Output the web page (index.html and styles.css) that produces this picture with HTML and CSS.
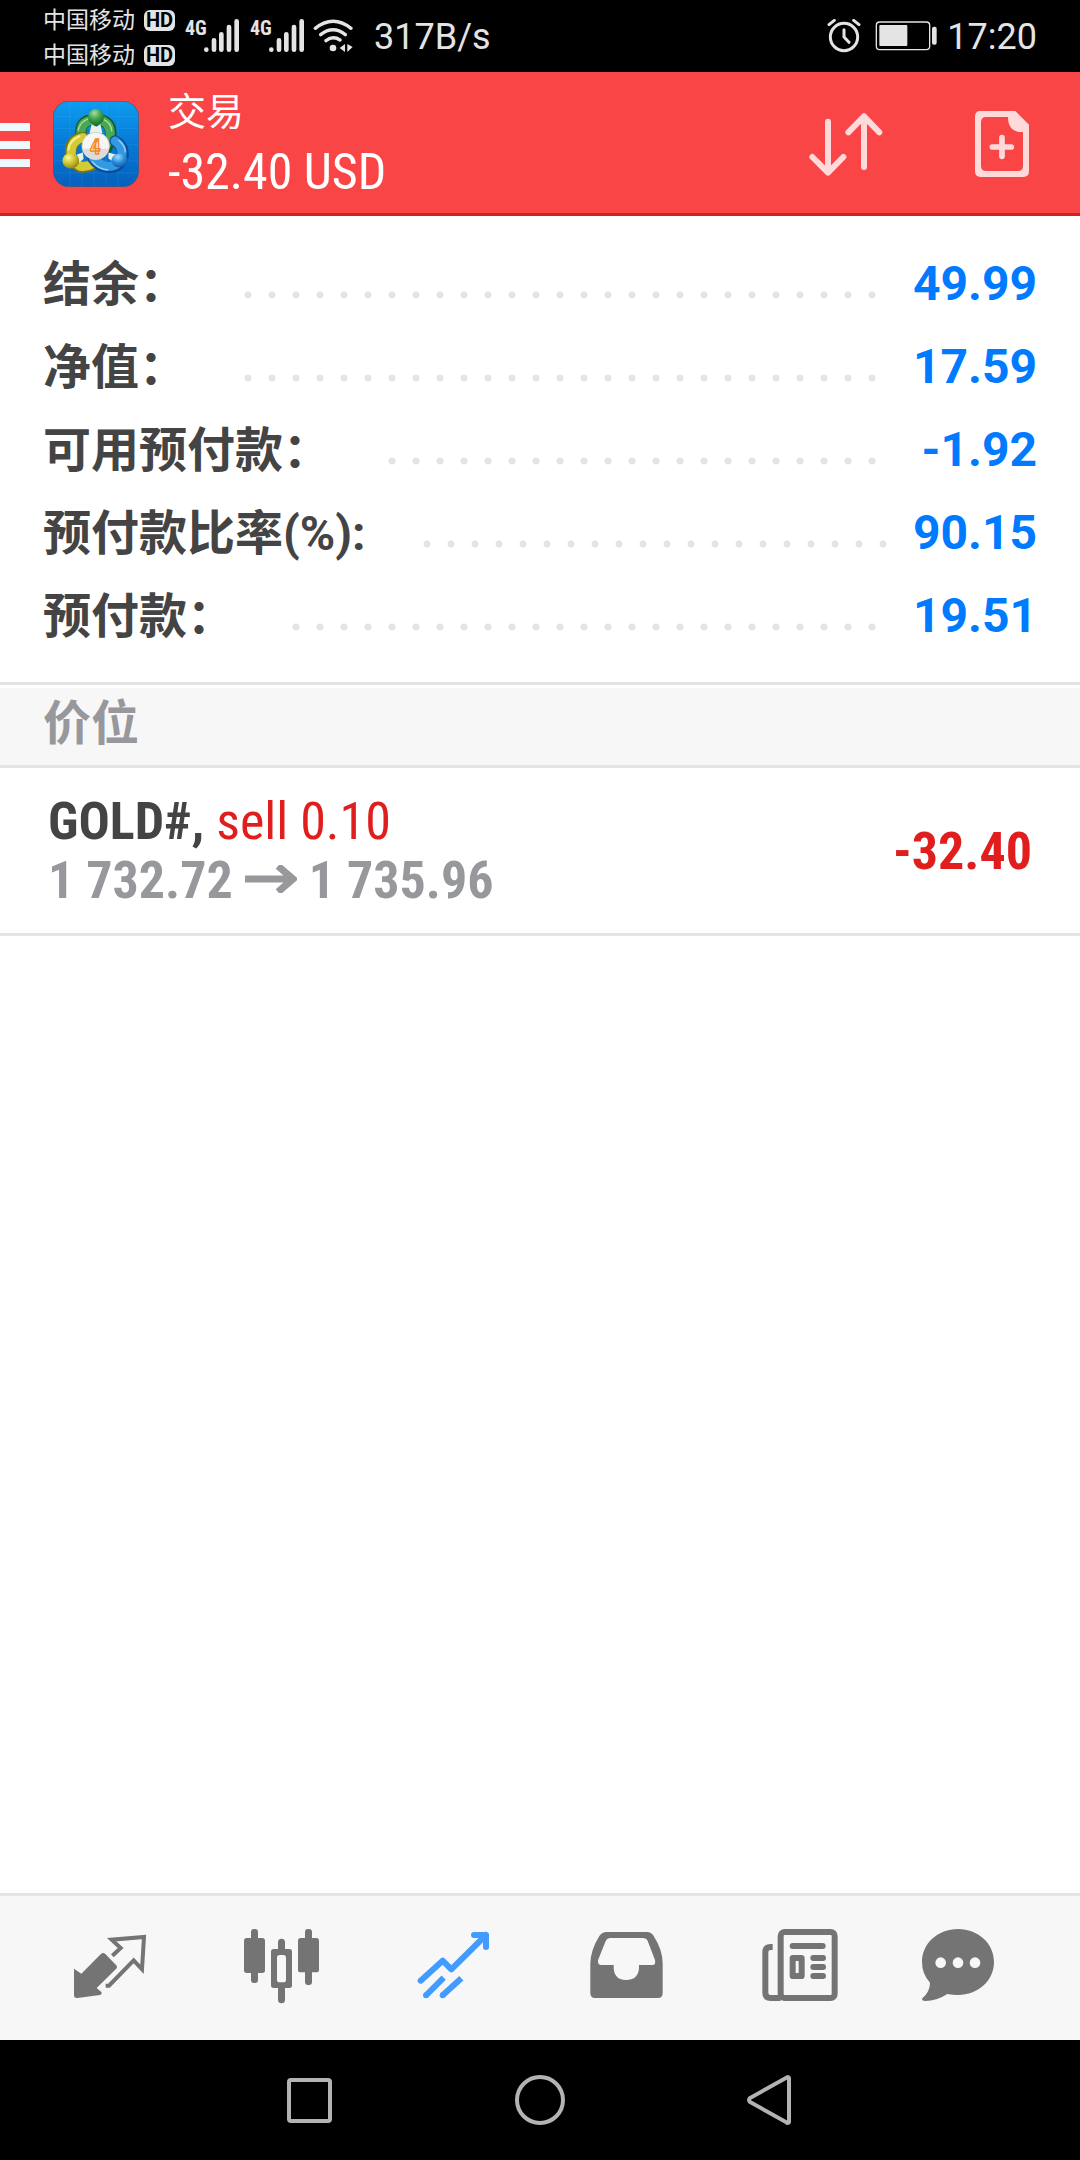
FILE: index.html
```html
<!DOCTYPE html>
<html lang="zh-CN">
<head>
<meta charset="utf-8">
<meta name="viewport" content="width=device-width, initial-scale=1">
<title>交易</title>
<link rel="stylesheet" href="styles.css">
</head>
<body>
<div class="status">
  <div class="carriers">
    <div class="carrier">中国移动 <span class="hd">HD</span></div>
    <div class="carrier">中国移动 <span class="hd">HD</span></div>
  </div>
  <div class="signal">
    <span class="net">4G</span>
    <svg class="bars" viewBox="0 0 105 99" aria-hidden="true"><path d="M7 92v0M30 64v28M52 46v46M75 24v68M98 7v85"/></svg>
  </div>
  <div class="signal">
    <span class="net">4G</span>
    <svg class="bars" viewBox="0 0 105 99" aria-hidden="true"><path d="M7 92v0M30 64v28M52 46v46M75 24v68M98 7v85"/></svg>
  </div>
  <svg class="wifi" viewBox="939 57 120 102" aria-hidden="true">
    <path class="wifi-arc" d="M946 85Q999 43 1053 85M962 104Q999 75 1036 104M978 122Q999 106 1020 120"/>
    <circle cx="999" cy="144" r="10"/>
    <path d="M1019 144L1035 132V156ZM1042 132V156L1058 141Z"/>
  </svg>
  <span class="speed">317B/s</span>
  <svg class="alarm" viewBox="146 60 102 102" aria-hidden="true">
    <circle cx="197" cy="114" r="41"/><path d="M197 92V114L212 130M152 77L168 64M242 77L226 64"/>
  </svg>
  <svg class="battery" viewBox="291 66 186 90" aria-hidden="true">
    <rect class="cell" x="295" y="69" width="160" height="83" rx="10"/><rect x="304" y="78" width="84" height="63" rx="3"/><rect x="462" y="83" width="14" height="54" rx="6"/>
  </svg>
  <time class="clock">17:20</time>
</div>

<header class="header">
  <button class="menu" aria-label="菜单"><i></i><i></i><i></i></button>
  <svg class="logo" viewBox="41 35 256 256" role="img" aria-label="MetaTrader 4">
    <defs>
      <linearGradient id="sky" x1="0" y1="0" x2="0" y2="1"><stop offset="0" stop-color="#0d9df0"/><stop offset=".5" stop-color="#0779d6"/><stop offset="1" stop-color="#0560bd"/></linearGradient>
      <radialGradient id="green" cx=".4" cy=".25" r=".8"><stop offset="0" stop-color="#a5dba0"/><stop offset=".5" stop-color="#3da04a"/><stop offset="1" stop-color="#16672b"/></radialGradient>
      <radialGradient id="yellow" cx=".35" cy=".3" r=".8"><stop offset="0" stop-color="#fbf59a"/><stop offset=".5" stop-color="#cdc22c"/><stop offset="1" stop-color="#827b13"/></radialGradient>
      <radialGradient id="blue" cx=".4" cy=".25" r=".8"><stop offset="0" stop-color="#9adcff"/><stop offset=".5" stop-color="#2b8fdc"/><stop offset="1" stop-color="#0b4f9e"/></radialGradient>
    </defs>
    <rect x="42" y="36" width="254" height="254" rx="46" fill="url(#sky)" stroke="#39577f" stroke-width="2"/>
    <path d="M91 37V289M127 37V289M163 37V289M199 37V289M235 37V289M43 81H295M43 117H295M43 165H295M43 213H295M43 249H295" stroke="#55b4f0" stroke-opacity=".25" stroke-width="2"/>
    <g fill="none" stroke-linecap="round">
      <path d="M124 134Q122 94 154 92L184 92Q216 100 213 140Q210 160 200 176" stroke="#155c2b" stroke-width="34"/>
      <path d="M124 132Q124 96 154 93L184 93Q214 101 211 140Q208 156 198 168" stroke="#48a952" stroke-width="27"/>
      <path d="M116 122Q122 96 146 88M190 89Q214 100 216 124" stroke="#a7dda1" stroke-width="4"/>
      <path d="M130 144Q93 150 93 190Q91 216 122 231Q142 234 160 224" stroke="#7b7410" stroke-width="34"/>
      <path d="M130 144Q95 152 95 188Q95 215 122 229Q142 232 158 222" stroke="#d4ca35" stroke-width="27"/>
      <path d="M120 140Q90 152 87 180" stroke="#f5ef87" stroke-width="6"/>
      <path d="M226 154Q252 168 249 200Q240 234 204 233Q176 230 160 206" stroke="#0c4d98" stroke-width="34"/>
      <path d="M226 154Q250 170 246 198Q238 230 204 230Q178 226 162 206" stroke="#3399e0" stroke-width="27"/>
      <path d="M236 152Q256 168 256 186M158 216Q178 240 204 240" stroke="#93d4fa" stroke-width="4"/>
    </g>
    <path d="M156 104L170 112L182 104L188 130H150ZM112 194L130 188L132 208L118 218ZM206 188L228 194L220 216L206 206Z" fill="#e9f2e8"/>
    <circle cx="169" cy="83" r="24" fill="url(#green)"/>
    <ellipse cx="94" cy="213" rx="25" ry="23" fill="url(#yellow)"/>
    <ellipse cx="239" cy="212" rx="24" ry="21" fill="url(#blue)"/>
    <circle cx="168" cy="169" r="41" fill="#f8f6f5" stroke="#b9c4c0" stroke-width="2"/>
    <path d="M128 177H208A41 41 0 0 1 128 177Z" fill="#dedcda"/>
    <text x="167" y="192" text-anchor="middle" class="logo-digit">4</text>
  </svg>
  <div class="heading">
    <h1 class="title">交易</h1>
    <p class="profit">-32.40 USD</p>
  </div>
  <button class="tool" aria-label="排序">
    <svg class="sort" viewBox="87 333 222 195" aria-hidden="true"><path d="M144 362V514M97 468L144 515L190 468M252 498V346M205 394L252 346L298 394"/></svg>
  </button>
  <button class="tool" aria-label="新订单">
    <svg class="doc" viewBox="585 333 162 198" aria-hidden="true">
      <path fill-rule="evenodd" d="M600 333H706L747 374V514Q747 531 730 531H602Q585 531 585 514V350Q585 333 600 333ZM618 351Q603 351 603 367V497Q603 513 618 513H714Q729 513 729 498V396Q684 398 684 351Z"/>
      <path class="plus" d="M637 441H694M666 413V469"/>
    </svg>
  </button>
</header>

<main class="main">
  <dl class="summary">
    <div class="line"><dt>结余：</dt><span class="dots"></span><dd>49.99</dd></div>
    <div class="line"><dt>净值：</dt><span class="dots"></span><dd>17.59</dd></div>
    <div class="line"><dt>可用预付款：</dt><span class="dots"></span><dd>-1.92</dd></div>
    <div class="line"><dt>预付款比率(%):</dt><span class="dots"></span><dd>90.15</dd></div>
    <div class="line"><dt>预付款：</dt><span class="dots"></span><dd>19.51</dd></div>
  </dl>
  <h2 class="section">价位</h2>
  <article class="position">
    <div class="deal">
      <p class="symbol">GOLD#, <span class="side">sell 0.10</span></p>
      <p class="prices">1 732.72 <svg class="arrow" viewBox="0 0 52 28" role="img" aria-label="至"><path d="M0 14H46M33 1L48 14L33 27"/></svg> 1 735.96</p>
    </div>
    <p class="result">-32.40</p>
  </article>
</main>

<nav class="tabs">
  <a class="tab" href="#quotes" aria-label="行情"><svg viewBox="66 120 288 288"><path d="M102 266L124 281L182 223Q189 216 196 222L228 255Q234 261 228 267L170 324L184 336Q187 343 180 345L112 354Q102 355 102 346Z"/><path class="thin" d="M217 227L242 204L215 179L312 171L306 268L281 241L207 317H197"/></svg></a>
  <a class="tab" href="#chart" aria-label="图表"><svg viewBox="582 120 288 288"><rect x="612" y="174" width="63" height="105" rx="8"/><rect x="633" y="147" width="21" height="162" rx="9"/><rect x="774" y="174" width="63" height="103" rx="8"/><rect x="795" y="147" width="21" height="168" rx="9"/><path d="M714 207V187A10 10 0 0 1 735 187V207H748Q756 207 756 215V316Q756 324 748 324H735V359A10 10 0 0 1 714 359V324H701Q693 324 693 316V215Q693 207 701 207ZM719 225Q711 225 711 233V299Q711 307 719 307H730Q738 307 738 299V233Q738 225 730 225Z" fill-rule="evenodd"/></svg></a>
  <a class="tab active" href="#trade" aria-label="交易" aria-current="page"><svg viewBox="1098 120 288 288"><path class="stroke" d="M1142 302L1208 242L1234 268L1338 165M1302 165H1338V201"/><path class="stroke flat" d="M1158 346L1211 293M1208 346L1264 295"/><circle cx="1158" cy="346" r="9"/><circle cx="1208" cy="346" r="9"/></svg></a>
  <a class="tab" href="#history" aria-label="历史"><svg viewBox="114 120 288 288"><path fill-rule="evenodd" d="M200 156H320Q334 156 341 168Q368 210 368 250V340Q368 354 354 354H165Q151 354 151 340V250Q152 210 178 168Q186 156 200 156ZM212 174Q201 174 197 183L174 241Q172 255 184 255H221Q219 300 258 300Q299 300 297 255H338Q348 255 345 240L323 183Q320 174 308 174Z"/></svg></a>
  <a class="tab" href="#news" aria-label="新闻"><svg viewBox="630 120 288 288"><path class="stroke flat" d="M698 201H692Q676 201 676 216V338Q676 354 692 354H722"/><rect class="stroke" x="722" y="156" width="162" height="198" rx="12"/><path class="stroke" d="M758 198H848M820 234H849M820 261H849M820 288H849"/><rect class="stroke" x="758" y="234" width="27" height="54" rx="1"/></svg></a>
  <a class="tab" href="#messages" aria-label="消息"><svg viewBox="1146 120 288 288"><path fill-rule="evenodd" d="M1254 147C1314 147 1362 190 1362 246C1362 302 1314 345 1254 345Q1238 345 1222 342Q1190 363 1156 363Q1144 363 1147 355Q1170 335 1170 308Q1146 282 1146 246C1146 190 1194 147 1254 147ZM1218 248a16 16 0 1 0-32 0a16 16 0 1 0 32 0M1270 248a16 16 0 1 0-32 0a16 16 0 1 0 32 0M1321 248a16 16 0 1 0-32 0a16 16 0 1 0 32 0"/></svg></a>
</nav>

<div class="system">
  <button class="key" aria-label="最近任务"><svg viewBox="0 0 54 54"><rect x="7" y="7" width="41" height="41" rx="2"/></svg></button>
  <button class="key" aria-label="主屏幕"><svg viewBox="0 0 54 54"><circle cx="27" cy="27" r="23"/></svg></button>
  <button class="key" aria-label="返回"><svg viewBox="0 0 54 54"><path d="M42 5Q44 3 45 5V49Q44 51 42 49L6 29Q4 27 6 25Z"/></svg></button>
</div>
</body>
</html>
```

FILE: styles.css
```css
* {
  box-sizing: border-box;
  margin: 0;
  padding: 0;
}

body {
  display: flex;
  flex-direction: column;
  min-height: 100vh;
  background: #fff;
  color: #444;
  font-family: Roboto, "Noto Sans CJK SC", sans-serif;
}

button {
  border: 0;
  background: none;
  font: inherit;
}

svg {
  display: block;
  flex: none;
}

/* Status bar */
.status {
  display: flex;
  align-items: center;
  height: 72px;
  padding: 0 43px;
  background: #000;
  color: #e4e4e4;
  fill: #e4e4e4;
}

.carriers {
  width: 142px;
  padding-top: 3px;
}

.carrier {
  display: flex;
  align-items: center;
  justify-content: space-between;
  width: 132px;
  height: 35px;
  font-size: 23px;
  line-height: 35px;
}

.hd {
  width: 31px;
  border-radius: 6px;
  background: #e4e4e4;
  color: #000;
  font-size: 20px;
  font-weight: 700;
  line-height: 21px;
  text-align: center;
}

.signal {
  display: flex;
  align-items: flex-start;
  width: 65px;
  height: 34px;
}

.net {
  width: 19px;
  font-family: "Roboto Condensed", "Liberation Sans Narrow", sans-serif;
  font-size: 20px;
  font-weight: 700;
  line-height: 18px;
}

.bars {
  width: 35px;
  height: 33px;
  fill: none;
  stroke: #e4e4e4;
  stroke-width: 14;
  stroke-linecap: round;
}

.wifi {
  width: 40px;
  height: 34px;
  margin: 0 21px 0 -2px;
}

.wifi-arc {
  fill: none;
  stroke: #e4e4e4;
  stroke-width: 10;
  stroke-linecap: round;
}

.speed,
.clock {
  padding-top: 2px;
  font-size: 36px;
  line-height: 48px;
}

.alarm {
  width: 34px;
  height: 34px;
  margin-left: auto;
  fill: none;
  stroke: #e4e4e4;
  stroke-width: 9;
  stroke-linecap: round;
}

.battery {
  width: 62px;
  height: 30px;
  margin: 0 10px 0 14px;
}

.cell {
  fill: none;
  stroke: #e4e4e4;
  stroke-width: 4;
}

/* Header */
.header {
  display: flex;
  align-items: center;
  height: 144px;
  padding: 3px 51px 0 0;
  border-bottom: 3px solid #d71f1f;
  background: #f94546;
  color: #fff;
}

.menu {
  display: flex;
  flex-direction: column;
  gap: 10px;
  width: 30px;
  margin-right: 23px;
  padding-top: 2px;
}

.menu i {
  height: 8px;
  background: #f0f8ff;
}

.logo {
  width: 86px;
  height: 86px;
}

.logo-digit {
  fill: #fff3d6;
  stroke: #f08a2c;
  stroke-width: 4;
  font: 700 62px "Roboto Condensed", "Liberation Sans Narrow", sans-serif;
}

.heading {
  flex: 1;
  margin-left: 29px;
}

.title {
  font-size: 38px;
  font-weight: 400;
  line-height: 56px;
}

.profit {
  font-family: "Roboto Condensed", "Liberation Sans Narrow", sans-serif;
  font-size: 50px;
  line-height: 64px;
}

.tool {
  display: flex;
}

.sort {
  width: 74px;
  height: 65px;
  margin-right: 92px;
  fill: none;
  stroke: #ffdada;
  stroke-width: 18;
  stroke-linecap: round;
  stroke-linejoin: round;
}

.doc {
  width: 54px;
  height: 66px;
  fill: #ffdada;
}

.plus {
  stroke: #ffdada;
  stroke-width: 17;
  stroke-linecap: round;
}

/* Account summary */
.main {
  flex: 1;
}

.summary {
  padding: 26px 43px 25px;
  border-bottom: 3px solid #e4e4e4;
}

.line {
  display: flex;
  align-items: center;
  height: 83px;
  font-size: 48px;
  font-weight: 700;
  line-height: 83px;
}

.line dt {
  padding-top: 2px;
}

.dots {
  flex: 1;
  height: 8px;
  margin: 23px 17px 0 57px;
  background: radial-gradient(circle at 4px 4px, #e4e4e4 3px, transparent 4px) 0 0 / 24px 8px repeat-x;
}

.line dd {
  width: 128px;
  color: #007aff;
  text-align: right;
}

.section {
  margin-top: 3px;
  padding: 0 43px 6px;
  border-bottom: 3px solid #e4e4e4;
  background: #f7f7f7;
  color: #97989c;
  font-size: 48px;
  font-weight: 700;
  line-height: 71px;
}

/* Open position */
.position {
  display: flex;
  align-items: center;
  justify-content: space-between;
  padding: 24px 48px 23px;
  border-bottom: 3px solid #e4e4e4;
  font-family: "Roboto Condensed", "Liberation Sans Narrow", sans-serif;
  font-size: 52px;
  font-weight: 700;
  line-height: 59px;
}

.side {
  color: #e01e1e;
  font-weight: 400;
}

.prices {
  color: #97989c;
}

.arrow {
  display: inline-block;
  width: 52px;
  height: 28px;
  vertical-align: 5px;
  fill: none;
  stroke: #97989c;
  stroke-width: 7;
}

.result {
  color: #e01e1e;
}

/* Tab bar */
.tabs {
  display: grid;
  grid-template-columns: repeat(6, 1fr);
  padding: 24px;
  border-top: 3px solid #e4e4e4;
  background: #f7f7f7;
}

.tab {
  display: flex;
  justify-content: center;
  color: #747474;
}

.tab.active {
  color: #429bff;
}

.tab svg {
  width: 96px;
  height: 96px;
  fill: currentColor;
}

.tab .thin {
  fill: none;
  stroke: currentColor;
  stroke-width: 12;
}

.tab .stroke {
  fill: none;
  stroke: currentColor;
  stroke-width: 18;
  stroke-linecap: round;
  stroke-linejoin: round;
}

.tab .flat {
  stroke-linecap: butt;
}

/* System navigation */
.system {
  display: flex;
  justify-content: center;
  height: 120px;
  background: #000;
}

.key {
  display: flex;
  align-items: center;
  justify-content: center;
  width: 231px;
}

.key svg {
  width: 54px;
  height: 54px;
  fill: none;
  stroke: #b3b3b3;
  stroke-width: 4;
}
```
